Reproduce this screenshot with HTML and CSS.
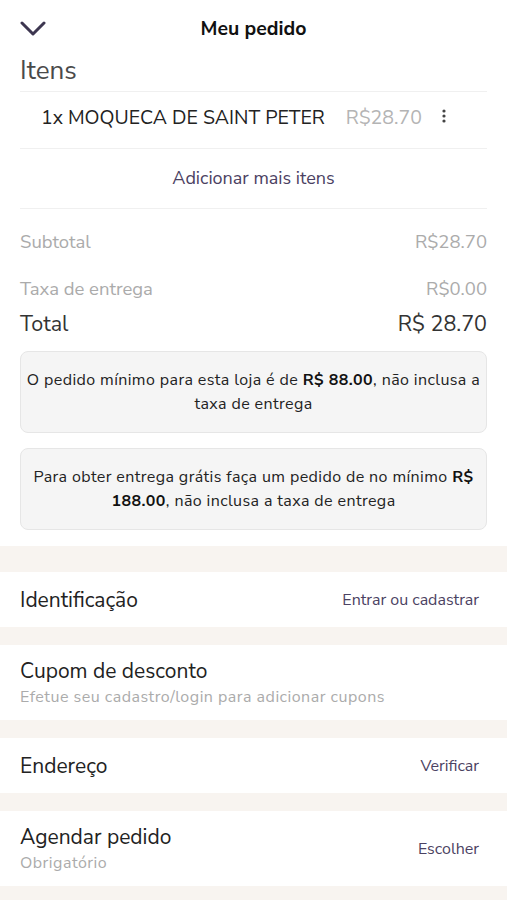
FILE: index.html
```html
<!DOCTYPE html>
<html lang="pt-BR">
<head>
    <meta charset="UTF-8">
    <meta name="viewport" content="width=device-width, initial-scale=1.0">
    <title>Meu pedido</title>
    <link rel="stylesheet" href="styles.css">
</head>
<body>
<div class="header">
    <span class="back">
        <svg width="26" height="16" viewBox="0 0 26 16"><path d="M2 2 L13 13 L24 2" fill="none" stroke="#3d3650" stroke-width="3" stroke-linecap="round" stroke-linejoin="round"/></svg>
    </span>
    <h1 class="title">Meu pedido</h1>
    <span></span>
</div>

<div class="cart">
    <h2 class="cart-title">Itens</h2>
    <div class="item-row">
        <span class="item-name">1x MOQUECA DE SAINT PETER</span>
        <span class="item-price">R$28.70</span>
        <span class="item-menu">
            <svg width="4" height="14" viewBox="0 0 4 14"><circle cx="2" cy="2" r="1.6" fill="#444"/><circle cx="2" cy="7" r="1.6" fill="#444"/><circle cx="2" cy="12" r="1.6" fill="#444"/></svg>
        </span>
    </div>
    <div class="add-more">Adicionar mais itens</div>

    <div class="sum-row muted">
        <span>Subtotal</span>
        <span>R$28.70</span>
    </div>
    <div class="sum-row muted">
        <span>Taxa de entrega</span>
        <span>R$0.00</span>
    </div>
    <div class="sum-row total">
        <span>Total</span>
        <span>R$ 28.70</span>
    </div>

    <div class="notice">O pedido mínimo para esta loja é de <b>R$ 88.00</b>, não inclusa a taxa de entrega</div>
    <div class="notice">Para obter entrega grátis faça um pedido de no mínimo <b>R$ 188.00</b>, não inclusa a taxa de entrega</div>
</div>

<div class="options">
    <div class="option">
        <div class="option-text">
            <div class="option-title">Identificação</div>
        </div>
        <span class="option-action">Entrar ou cadastrar</span>
    </div>
    <div class="option tall">
        <div class="option-text">
            <div class="option-title">Cupom de desconto</div>
            <div class="option-sub">Efetue seu cadastro/login para adicionar cupons</div>
        </div>
    </div>
    <div class="option">
        <div class="option-text">
            <div class="option-title">Endereço</div>
        </div>
        <span class="option-action">Verificar</span>
    </div>
    <div class="option tall">
        <div class="option-text">
            <div class="option-title">Agendar pedido</div>
            <div class="option-sub">Obrigatório</div>
        </div>
        <span class="option-action">Escolher</span>
    </div>
</div>
</body>
</html>
```

FILE: styles.css
```css
body {
    margin: 0;
    background-color: #fff;
    color: #222;
    font-family: "Nunito Sans", Lato, "Open Sans", sans-serif;
}

.header {
    display: grid;
    grid-template-columns: 1fr auto 1fr;
    align-items: center;
    height: 56px;
    padding: 0 20px;
}

.back {
    display: flex;
    align-items: center;
    padding-top: 2px;
}

.title {
    margin: 0;
    font-size: 19.5px;
    font-weight: 700;
    color: #111;
}

.cart {
    padding: 0 20px 16px;
}

.cart-title {
    margin: 0;
    font-size: 26px;
    font-weight: 400;
    line-height: 30px;
    color: #4a4a4a;
    padding-bottom: 5px;
    border-bottom: 1px solid #f0f0f0;
}

.item-row {
    display: flex;
    align-items: center;
    height: 51px;
    padding: 0 0 5px 21px;
    border-bottom: 1px solid #f0f0f0;
    font-size: 19.5px;
}

.item-name {
    color: #222;
}

.item-price {
    margin-left: 21px;
    color: #b4b4b4;
}

.item-menu {
    display: flex;
    margin-left: 20px;
    margin-top: -4px;
}

.add-more {
    height: 59px;
    line-height: 59px;
    text-align: center;
    font-size: 18px;
    color: #4b4162;
    border-bottom: 1px solid #f0f0f0;
    margin-bottom: 9px;
}

.sum-row {
    display: flex;
    justify-content: space-between;
    align-items: center;
}

.sum-row.muted {
    height: 47px;
    font-size: 18.5px;
    color: #ababab;
}

.sum-row.total {
    height: 24px;
    font-size: 21.5px;
    color: #333;
    margin-bottom: 15px;
}

.notice {
    padding: 16px 4px;
    margin-bottom: 15px;
    background-color: #f5f5f5;
    border: 1px solid #e6e6e6;
    border-radius: 8px;
    text-align: center;
    font-size: 16px;
    letter-spacing: 0.4px;
    line-height: 24px;
    color: #222;
}

.notice:last-child {
    margin-bottom: 0;
}

.notice b {
    font-weight: 700;
    color: #111;
}

.options {
    display: flex;
    flex-direction: column;
    gap: 18px;
    padding: 26px 0 18px;
    background-color: #f8f4f0;
}

.option {
    display: flex;
    align-items: center;
    justify-content: space-between;
    height: 55px;
    padding: 0 28px 0 20px;
    background-color: #fff;
}

.option.tall {
    height: 75px;
}

.option-title {
    font-size: 21px;
    line-height: 26px;
    color: #222;
}

.option-sub {
    margin-top: 2px;
    font-size: 16px;
    letter-spacing: 0.5px;
    line-height: 22px;
    color: #ababab;
}

.option-action {
    font-size: 16px;
    color: #4b4262;
}
```
